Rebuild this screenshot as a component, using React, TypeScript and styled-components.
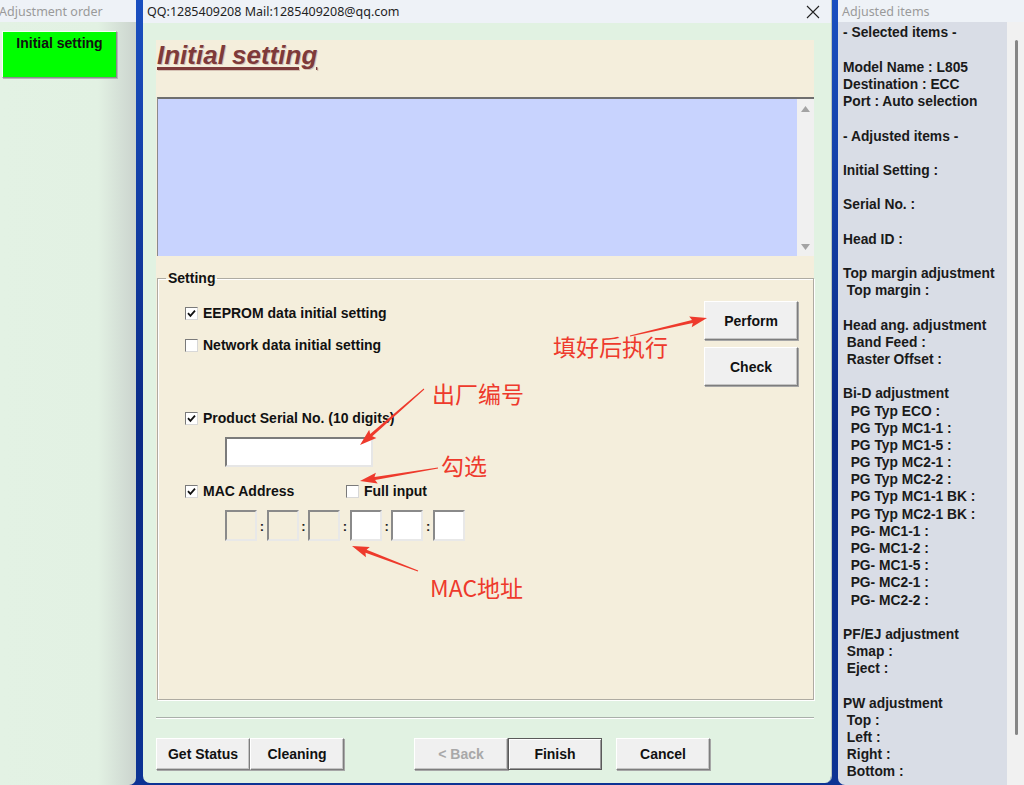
import React from 'react';
import styled, { createGlobalStyle } from 'styled-components';

const GlobalStyle = createGlobalStyle`
  html, body {
    margin: 0;
    padding: 0;
  }
  body {
    background: #0b2d8c;
    font-family: "Liberation Sans", Arial, sans-serif;
    overflow: hidden;
  }
  * {
    box-sizing: border-box;
  }
`;

const Desktop = styled.div`
  display: flex;
  width: 1024px;
  height: 785px;
  background: linear-gradient(180deg, #1a4fc0 0%, #0a2a86 55%, #0c3394 100%);
  overflow: hidden;
`;

/* ---------- shared window parts ---------- */

const TitleBar = styled.div<{ $h?: number }>`
  height: ${p => p.$h ?? 22}px;
  flex-shrink: 0;
  display: flex;
  align-items: center;
  background: #eef2f7;
  font-family: "Noto Sans", "Open Sans", sans-serif;
  font-size: 12.5px;
  white-space: nowrap;
  overflow: hidden;
`;

const FadedCaption = styled.span<{ $left: number }>`
  color: #9a9a9a;
  margin-left: ${p => p.$left}px;
`;

/* ---------- left window ---------- */

const LeftWindow = styled.div`
  width: 136px;
  flex-shrink: 0;
  display: flex;
  flex-direction: column;
`;

const LeftBody = styled.div`
  flex: 1;
  padding: 9px 0 0 2px;
  background: linear-gradient(90deg, #e3f2e4 0%, #e2f1e3 72%, #cbd4ce 100%);
  border-bottom-right-radius: 7px;
`;

const OrderButton = styled.div`
  width: 115px;
  height: 47px;
  background: #00ff00;
  border: 1px solid;
  border-color: #f4fff4 #8c8c8c #8c8c8c #f4fff4;
  box-shadow: 1px 1px 0 #b5b5b5;
  text-align: center;
  padding-top: 3px;
  font-weight: bold;
  font-size: 14px;
  color: #111;
`;

/* ---------- main window ---------- */

const MainWindow = styled.div`
  position: relative;
  width: 689px;
  margin-left: 7px;
  flex-shrink: 0;
  display: flex;
  flex-direction: column;
  height: 783px;
  border-radius: 0 0 7px 7px;
  overflow: hidden;
  border-right: 1px solid #b9c6be;
`;

const MainCaption = styled.span`
  color: #1f1f1f;
  margin-left: 4px;
  flex: 1;
`;

const CloseIcon = styled.svg`
  margin-right: 11px;
`;

const MainBody = styled.div`
  flex: 1;
  background: #e1f2e2;
  padding: 17px 17px 0 13px;
  display: flex;
  flex-direction: column;
`;

const BeigePanel = styled.div`
  height: 660px;
  background: #f4eedc;
  display: flex;
  flex-direction: column;
`;

const PageTitle = styled.div`
  height: 57px;
  padding: 0 0 0 1px;
  font-size: 26px;
  line-height: 30px;
  font-weight: bold;
  font-style: italic;
  color: #7e3a3a;
  text-decoration: underline;
  text-decoration-thickness: 3px;
  text-underline-offset: 3px;
  text-shadow: 1px 1px 0 rgba(120, 60, 60, 0.25);
`;

const MessageBox = styled.div`
  height: 159px;
  display: flex;
  background: #c8d3fe;
  border-top: 2px solid #6f6f6f;
  border-left: 1px solid #8a8a8a;
  margin-left: 1px;
`;

const MessageText = styled.div`
  flex: 1;
`;

const VScroll = styled.div`
  width: 17px;
  background: #f0f0f0;
  display: flex;
  flex-direction: column;
  justify-content: space-between;
  align-items: center;
  padding: 7px 0 6px;
`;

const GroupBox = styled.fieldset`
  flex: 1;
  margin: 14px 0 0 1px;
  padding: 15px 15px 0 8px;
  border: 1px solid #aeaba2;
  box-shadow: inset 1px 1px 0 #ffffff, 1px 1px 0 #ffffff;
  min-width: 0;
  display: flex;
`;

const Legend = styled.legend`
  padding: 0 2px;
  font-weight: bold;
  font-size: 14px;
  line-height: 16px;
  color: #111;
`;

const GroupInner = styled.div`
  flex: 1;
  display: flex;
`;

const OptionsColumn = styled.div`
  flex: 1;
  padding-left: 19px;
  display: flex;
  flex-direction: column;
`;

const OptionRow = styled.div<{ $mt?: number }>`
  display: flex;
  align-items: center;
  height: 24px;
  margin-top: ${p => p.$mt ?? 0}px;
  font-weight: bold;
  font-size: 14px;
  color: #111;
`;

const CheckItem = styled.label<{ $width?: number }>`
  display: flex;
  align-items: center;
  gap: 5px;
  width: ${p => (p.$width ? `${p.$width}px` : 'auto')};
`;

const Box = styled.span`
  width: 13px;
  height: 13px;
  flex-shrink: 0;
  background: #fff;
  border: 1px solid;
  border-color: #7a7a7a #d8d8d8 #d8d8d8 #7a7a7a;
  display: flex;
  align-items: center;
  justify-content: center;
`;

const SerialInput = styled.div`
  width: 148px;
  height: 30px;
  margin: 7px 0 0 40px;
  background: #fff;
  border: 2px solid;
  border-color: #7b7b7b #e6e6e6 #e6e6e6 #7b7b7b;
`;

const MacRow = styled.div`
  display: flex;
  align-items: center;
  margin: 7px 0 0 40px;
`;

const MacField = styled.div<{ $enabled: boolean }>`
  width: 32px;
  height: 31px;
  background: ${p => (p.$enabled ? '#ffffff' : '#f4eedc')};
  border: 2px solid;
  border-color: #8a8a8a #e8e8e8 #e8e8e8 #8a8a8a;
`;

const MacColon = styled.span`
  width: 9.6px;
  text-align: center;
  font-weight: bold;
  font-size: 13px;
  color: #222;
  padding-top: 2px;
`;

const ActionColumn = styled.div`
  width: 94px;
  display: flex;
  flex-direction: column;
  gap: 7px;
`;

const WinButton = styled.div<{ $h?: number; $default?: boolean; $disabled?: boolean }>`
  width: 94px;
  height: ${p => p.$h ?? 32}px;
  display: flex;
  align-items: center;
  justify-content: center;
  background: #f0f0f0;
  border: 1px solid;
  border-color: ${p => (p.$default ? '#5a5a5a' : '#ffffff #7d7d7d #7d7d7d #ffffff')};
  box-shadow: ${p =>
    p.$default ? 'inset 1px 1px 0 #ffffff, inset -1px -1px 0 #9a9a9a' : 'inset -1px -1px 0 #c4c4c4, 1px 1px 0 #a6a6a6'};
  font-weight: bold;
  font-size: 14px;
  color: ${p => (p.$disabled ? '#a8a8a8' : '#111')};
`;

const Separator = styled.div`
  margin-top: 17px;
  height: 2px;
  border-top: 1px solid #a9b0aa;
  border-bottom: 1px solid #ffffff;
`;

const ButtonBar = styled.div`
  margin-top: 19px;
  display: flex;
`;

const ButtonGroup = styled.div<{ $ml?: number }>`
  display: flex;
  margin-left: ${p => p.$ml ?? 0}px;
`;

/* ---------- annotations (drawn over the dialog) ---------- */

const Overlay = styled.svg`
  position: absolute;
  left: 0;
  top: 0;
  pointer-events: none;
`;

const Note = styled.span<{ $x: number; $y: number }>`
  position: absolute;
  left: ${p => p.$x}px;
  top: ${p => p.$y}px;
  font-family: "Noto Sans CJK SC", "Noto Sans", sans-serif;
  font-size: 23px;
  line-height: 26px;
  color: #ee3a2c;
  white-space: nowrap;
  pointer-events: none;
`;

/* ---------- right window ---------- */

const RightWindow = styled.div`
  flex: 1;
  margin-left: 6px;
  display: flex;
  flex-direction: column;
`;

const RightBody = styled.div`
  flex: 1;
  display: flex;
  min-height: 0;
`;

const ItemList = styled.div`
  width: 169px;
  background: #d9dde6;
  border-bottom-left-radius: 7px;
  padding: 2.4px 0 0 5px;
  font-weight: bold;
  font-size: 13.8px;
  line-height: 17.2px;
  color: #1a1a1a;
  white-space: pre;
  overflow: hidden;
`;

const ItemLine = styled.div`
  height: 17.2px;
`;

const ScrollStrip = styled.div`
  flex: 1;
  background: #f1f1f1;
  padding: 18px 0 0 8px;
`;

const ScrollThumb = styled.div`
  width: 3px;
  height: 695px;
  border-radius: 2px;
  background: #868686;
`;

/* ---------- helpers ---------- */

const CheckBox: React.FC<{ checked?: boolean }> = ({ checked }) => (
  <Box>
    {checked && (
      <svg width="9" height="9" viewBox="0 0 9 9">
        <path d="M1 4.2 L3.4 6.8 L8 1.6" fill="none" stroke="#111" strokeWidth="1.8" />
      </svg>
    )}
  </Box>
);

const Triangle: React.FC<{ up?: boolean }> = ({ up }) => (
  <svg width="9" height="6" viewBox="0 0 9 6">
    <path d={up ? 'M0 6 L4.5 0 L9 6 Z' : 'M0 0 L4.5 6 L9 0 Z'} fill="#a3a3a3" />
  </svg>
);

const OX = 143; // main window left edge on the page

function arrowPoints(x1: number, y1: number, x2: number, y2: number) {
  const ax = x1 - OX;
  const bx = x2 - OX;
  const dx = bx - ax;
  const dy = y2 - y1;
  const len = Math.hypot(dx, dy);
  const ux = dx / len;
  const uy = dy / len;
  const nx = -uy;
  const ny = ux;
  const head = 15;
  const hw = 5.5;
  const s0 = 0.5;
  const s1 = 1.6;
  const hx = bx - ux * head;
  const hy = y2 - uy * head;
  const pts = [
    [ax + nx * s0, y1 + ny * s0],
    [hx + nx * s1, hy + ny * s1],
    [hx - ux * 2 + nx * hw, hy - uy * 2 + ny * hw],
    [bx, y2],
    [hx - ux * 2 - nx * hw, hy - uy * 2 - ny * hw],
    [hx - nx * s1, hy - ny * s1],
    [ax - nx * s0, y1 - ny * s0],
  ];
  return pts.map(p => `${p[0].toFixed(1)},${p[1].toFixed(1)}`).join(' ');
}

const ARROWS: [number, number, number, number][] = [
  [630, 336, 707, 318],
  [424, 389, 360, 445],
  [438, 468, 360, 481],
  [418, 571, 352, 546],
];

const ITEMS = [
  '- Selected items -',
  '',
  'Model Name : L805',
  'Destination : ECC',
  'Port : Auto selection',
  '',
  '- Adjusted items -',
  '',
  'Initial Setting :',
  '',
  'Serial No. :',
  '',
  'Head ID :',
  '',
  'Top margin adjustment',
  ' Top margin :',
  '',
  'Head ang. adjustment',
  ' Band Feed :',
  ' Raster Offset :',
  '',
  'Bi-D adjustment',
  '  PG Typ ECO :',
  '  PG Typ MC1-1 :',
  '  PG Typ MC1-5 :',
  '  PG Typ MC2-1 :',
  '  PG Typ MC2-2 :',
  '  PG Typ MC1-1 BK :',
  '  PG Typ MC2-1 BK :',
  '  PG- MC1-1 :',
  '  PG- MC1-2 :',
  '  PG- MC1-5 :',
  '  PG- MC2-1 :',
  '  PG- MC2-2 :',
  '',
  'PF/EJ adjustment',
  ' Smap :',
  ' Eject :',
  '',
  'PW adjustment',
  ' Top :',
  ' Left :',
  ' Right :',
  ' Bottom :',
];

const MAC_ENABLED = [false, false, false, true, true, true];

export default function App() {
  return (
    <>
      <GlobalStyle />
      <Desktop>
        <LeftWindow>
          <TitleBar>
            <FadedCaption $left={-1}>Adjustment order</FadedCaption>
          </TitleBar>
          <LeftBody>
            <OrderButton>Initial setting</OrderButton>
          </LeftBody>
        </LeftWindow>

        <MainWindow>
          <TitleBar $h={23}>
            <MainCaption>QQ:1285409208 Mail:1285409208@qq.com</MainCaption>
            <CloseIcon width="14" height="14" viewBox="0 0 14 14">
              <path d="M1 1 L13 13 M13 1 L1 13" stroke="#222" strokeWidth="1.1" fill="none" />
            </CloseIcon>
          </TitleBar>
          <MainBody>
            <BeigePanel>
              <PageTitle>Initial setting</PageTitle>
              <MessageBox>
                <MessageText />
                <VScroll>
                  <Triangle up />
                  <Triangle />
                </VScroll>
              </MessageBox>
              <GroupBox>
                <Legend>Setting</Legend>
                <GroupInner>
                  <OptionsColumn>
                    <OptionRow>
                      <CheckItem>
                        <CheckBox checked />
                        EEPROM data initial setting
                      </CheckItem>
                    </OptionRow>
                    <OptionRow $mt={8}>
                      <CheckItem>
                        <CheckBox />
                        Network data initial setting
                      </CheckItem>
                    </OptionRow>
                    <OptionRow $mt={49}>
                      <CheckItem>
                        <CheckBox checked />
                        Product Serial No. (10 digits)
                      </CheckItem>
                    </OptionRow>
                    <SerialInput />
                    <OptionRow $mt={12}>
                      <CheckItem $width={161}>
                        <CheckBox checked />
                        MAC Address
                      </CheckItem>
                      <CheckItem>
                        <CheckBox />
                        Full input
                      </CheckItem>
                    </OptionRow>
                    <MacRow>
                      {MAC_ENABLED.map((en, i) => (
                        <React.Fragment key={i}>
                          {i > 0 && <MacColon>:</MacColon>}
                          <MacField $enabled={en} />
                        </React.Fragment>
                      ))}
                    </MacRow>
                  </OptionsColumn>
                  <ActionColumn>
                    <WinButton $h={39}>Perform</WinButton>
                    <WinButton $h={39}>Check</WinButton>
                  </ActionColumn>
                </GroupInner>
              </GroupBox>
            </BeigePanel>
            <Separator />
            <ButtonBar>
              <ButtonGroup>
                <WinButton>Get Status</WinButton>
                <WinButton>Cleaning</WinButton>
              </ButtonGroup>
              <ButtonGroup $ml={70}>
                <WinButton $disabled>&lt; Back</WinButton>
                <WinButton $default>Finish</WinButton>
              </ButtonGroup>
              <ButtonGroup $ml={14}>
                <WinButton>Cancel</WinButton>
              </ButtonGroup>
            </ButtonBar>
          </MainBody>

          <Overlay width="689" height="785" viewBox="0 0 689 785">
            {ARROWS.map((a, i) => (
              <polygon key={i} points={arrowPoints(a[0], a[1], a[2], a[3])} fill="#ee3a2c" />
            ))}
          </Overlay>
          <Note $x={553 - OX} $y={333}>填好后执行</Note>
          <Note $x={432 - OX} $y={380}>出厂编号</Note>
          <Note $x={441 - OX} $y={452}>勾选</Note>
          <Note $x={430 - OX} $y={574}>MAC地址</Note>
        </MainWindow>

        <RightWindow>
          <TitleBar>
            <FadedCaption $left={4}>Adjusted items</FadedCaption>
          </TitleBar>
          <RightBody>
            <ItemList>
              {ITEMS.map((t, i) => (
                <ItemLine key={i}>{t}</ItemLine>
              ))}
            </ItemList>
            <ScrollStrip>
              <ScrollThumb />
            </ScrollStrip>
          </RightBody>
        </RightWindow>
      </Desktop>
    </>
  );
}
